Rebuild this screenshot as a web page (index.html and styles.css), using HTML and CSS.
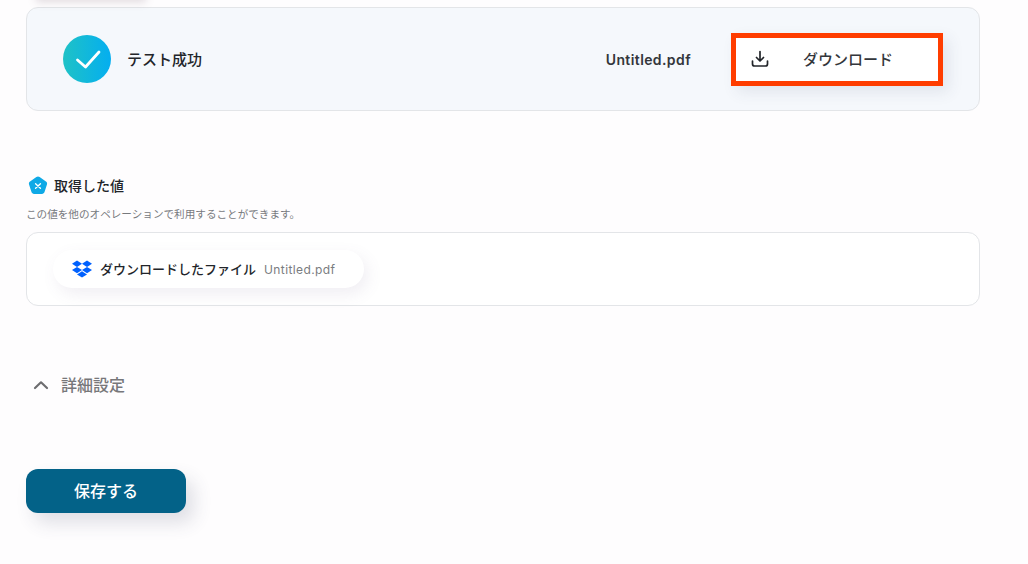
FILE: index.html
```html
<!DOCTYPE html>
<html lang="ja">
<head>
    <meta charset="UTF-8">
    <meta name="viewport" content="width=device-width, initial-scale=1.0">
    <title>テスト結果</title>
    <link rel="stylesheet" href="styles.css">
</head>
<body>
    <div class="page">
        <div class="top-shadow"></div>

        <section class="result">
            <div class="result-status">
                <span class="check">
                    <svg width="28" height="24" viewBox="0 0 28 24" fill="none">
                        <path d="M4.500 13L12.500 20L26 5" stroke="#fff" stroke-width="2.800" stroke-linecap="round" stroke-linejoin="round"/>
                    </svg>
                </span>
                <span class="status-text">テスト成功</span>
            </div>
            <div class="result-file">
                <span class="file-name">Untitled.pdf</span>
                <button class="download">
                    <svg class="download-icon" width="18" height="18" viewBox="0 0 18 18" fill="none">
                        <path d="M9 1.500V10.500M5.500 7.500L9 11L12.500 7.500" stroke="#22252a" stroke-width="1.700" stroke-linecap="round" stroke-linejoin="round"/>
                        <path d="M1.500 11V14C1.500 15.200 2.300 16 3.500 16H14.500C15.700 16 16.500 15.200 16.500 14V11" stroke="#22252a" stroke-width="1.700" stroke-linecap="round"/>
                    </svg>
                    <span class="download-label">ダウンロード</span>
                </button>
            </div>
        </section>

        <section class="values">
            <h2 class="values-title">
                <svg width="20" height="19" viewBox="0 0 22 21">
                    <path d="M9.200 1.100C10.300 0.300 11.700 0.300 12.800 1.100L19.800 6.200C20.900 7 21.300 8.300 20.900 9.500L18.200 17.800C17.800 19 16.700 19.900 15.400 19.900H6.600C5.300 19.900 4.200 19 3.800 17.800L1.100 9.500C0.700 8.300 1.100 7 2.200 6.200Z" fill="#0fa9e6"/>
                    <path d="M8.300 8.500L13.700 13.500M13.700 8.500L8.300 13.500" stroke="#fff" stroke-width="1.500" stroke-linecap="round"/>
                </svg>
                <span>取得した値</span>
            </h2>
            <p class="values-note">この値を他のオペレーションで利用することができます。</p>
            <div class="values-box">
                <div class="chip">
                    <svg width="20" height="18" viewBox="0 0 20 18" fill="#0061fe">
                        <path d="M5 0.500L0 3.700L5 6.900L10 3.700Z"/>
                        <path d="M15 0.500L10 3.700L15 6.900L20 3.700Z"/>
                        <path d="M0 10.100L5 13.300L10 10.100L5 6.900Z"/>
                        <path d="M15 6.900L10 10.100L15 13.300L20 10.100Z"/>
                        <path d="M5 14.400L10 17.600L15 14.400L10 11.200Z"/>
                    </svg>
                    <span class="chip-label">ダウンロードしたファイル</span>
                    <span class="chip-value">Untitled.pdf</span>
                </div>
            </div>
        </section>

        <div class="details">
            <svg width="16" height="10" viewBox="0 0 16 10" fill="none">
                <path d="M2 8L8 2.300L14 8" stroke="#6d6d70" stroke-width="2.200" stroke-linecap="round" stroke-linejoin="round"/>
            </svg>
            <span>詳細設定</span>
        </div>

        <button class="save">保存する</button>
    </div>
</body>
</html>
```

FILE: styles.css
```css
html, body {
    margin: 0;
    padding: 0;
    background: #fefdfe;
    overflow: hidden;
}

body {
    font-family: Inter, "Noto Sans CJK JP", sans-serif;
    color: #22252a;
}

.page {
    position: relative;
    width: 954px;
    height: 557px;
    padding: 7px 0 0 26px;
}

.top-shadow {
    position: absolute;
    left: 36px;
    top: -10px;
    width: 110px;
    height: 10px;
    box-shadow: 0 2px 8px rgba(120, 90, 110, 0.22);
}

.result {
    display: flex;
    align-items: center;
    justify-content: space-between;
    height: 102px;
    padding: 0 36px;
    background: #f5f8fc;
    border: 1px solid #e3e5e8;
    border-radius: 12px;
}

.result-status {
    display: flex;
    align-items: center;
    gap: 16px;
}

.check {
    display: flex;
    align-items: center;
    justify-content: center;
    width: 48px;
    height: 48px;
    border-radius: 50%;
    background: linear-gradient(90deg, #1fc2c6, #04aef0);
}

.status-text {
    padding-bottom: 2px;
    font-size: 15px;
    font-weight: 500;
}

.result-file {
    display: flex;
    align-items: center;
    gap: 40px;
}

.file-name {
    font-size: 14px;
    font-weight: 600;
    letter-spacing: 0.4px;
    color: #33363b;
}

.download {
    display: flex;
    align-items: center;
    width: 212px;
    height: 53px;
    padding: 0 0 0 15px;
    background: #fff;
    border: 5px solid #ff3d00;
    box-shadow: 6px 6px 14px rgba(60, 70, 100, 0.1);
    font-family: inherit;
    color: #33363b;
    box-sizing: border-box;
}

.download-icon {
    flex: none;
}

.download-label {
    margin-left: 34px;
    padding-bottom: 2px;
    font-size: 15px;
    font-weight: 500;
}

.values {
    margin-top: 64px;
}

.values-title {
    display: flex;
    align-items: center;
    gap: 6px;
    margin: 0 0 0 2px;
    font-size: 14px;
    font-weight: 500;
    line-height: 21px;
}

.values-note {
    margin: 12px 0 0;
    font-size: 10.6px;
    line-height: 14px;
    color: #77797d;
}

.values-box {
    display: flex;
    align-items: center;
    height: 72px;
    margin-top: 10px;
    padding-left: 26px;
    background: #fff;
    border: 1px solid #e3e5e8;
    border-radius: 12px;
}

.chip {
    display: flex;
    align-items: center;
    width: 311px;
    height: 38px;
    padding-left: 19px;
    box-sizing: border-box;
    background: #fff;
    border-radius: 19px;
    box-shadow: 4px 6px 16px rgba(110, 90, 140, 0.1);
}

.chip-label {
    margin-left: 8px;
    padding-bottom: 2px;
    font-size: 13px;
    font-weight: 500;
}

.chip-value {
    margin-left: 8px;
    font-size: 12px;
    letter-spacing: 0.4px;
    color: #7a7c80;
}

.details {
    display: flex;
    align-items: center;
    gap: 12px;
    margin: 68px 0 0 7px;
    font-size: 16px;
    font-weight: 500;
    line-height: 22px;
    color: #77777a;
}

.save {
    display: block;
    width: 160px;
    height: 44px;
    margin-top: 73px;
    padding: 0 0 2px;
    border: 0;
    border-radius: 12px;
    background: #036288;
    box-shadow: 8px 10px 18px rgba(60, 70, 100, 0.16);
    color: #fff;
    font-family: inherit;
    font-size: 16px;
    font-weight: 500;
}
```
